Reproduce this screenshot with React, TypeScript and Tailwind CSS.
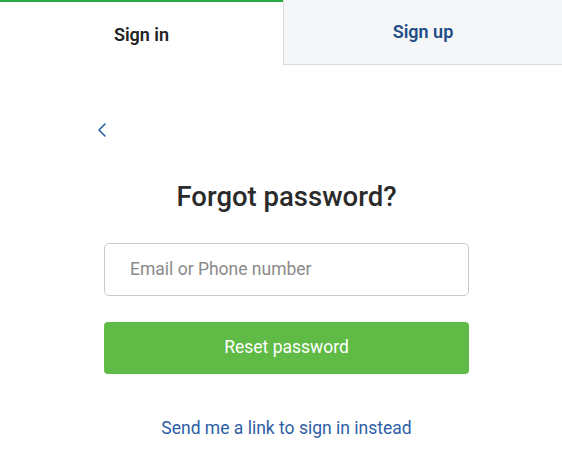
import { ChevronLeft } from 'lucide-react'

export default function App() {
  return (
    <div className="w-[562px] h-[472px] bg-white overflow-hidden font-['Roboto',sans-serif]">
      {/* Tabs */}
      <div className="flex h-[65px]">
        <button className="w-[283px] border-t-2 border-[#27a844] bg-white text-[18px] font-semibold text-[#222] pt-[1px]">
          Sign in
        </button>
        <button className="flex-1 bg-[#f5f6f8] border-l border-b border-[#dcdcdc] text-[18px] font-semibold text-[#1f4d86] pb-[1px]">
          Sign up
        </button>
      </div>

      <main className="w-[365px] ml-[104px]">
        <button className="mt-[53px] ml-[-14px] text-[#2a5ea5]">
          <ChevronLeft size={24} strokeWidth={1.6} />
        </button>

        <h1 className="mt-[34px] text-center text-[27.5px] text-[#2b2b2b] font-medium leading-none">Forgot password?</h1>

        <input
          placeholder="Email or Phone number"
          className="mt-[32px] w-full h-[53px] rounded-[5px] border border-[#c6cad1] px-[25px] text-[17.5px] text-[#333] placeholder-[#8a8a8a] outline-none"
        />

        <button className="mt-[26px] w-full h-[52px] rounded-[4px] bg-[#5fba46] text-white text-[17.5px]">
          Reset password
        </button>

        <div className="mt-[41px] text-center">
          <a href="#" className="text-[17.5px] text-[#2d5ea6]">Send me a link to sign in instead</a>
        </div>
      </main>
    </div>
  )
}
